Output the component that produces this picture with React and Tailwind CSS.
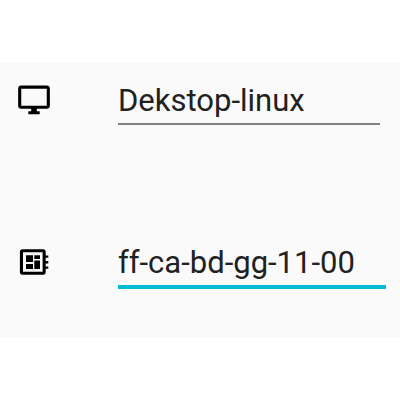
function MonitorIcon(props) {
  return (
    <svg viewBox="0 0 24 24" fill="currentColor" aria-hidden="true" {...props}>
      <path d="M21 1.800H3c-1.300 0-2.200.9-2.200 2.100v12.200c0 1.200.9 2.100 2.200 2.100h7v1.800H8v2.100h8v-2.100h-2v-1.800h7c1.300 0 2.200-.9 2.200-2.100V3.900c0-1.200-.9-2.100-2.200-2.100zm0 14.200H3V4h18v12z" />
    </svg>
  );
}

function BoardIcon(props) {
  return (
    <svg viewBox="0 0 34 34" fill="currentColor" aria-hidden="true" {...props}>
      <path
        fillRule="evenodd"
        d="M5.500 4.300h20.600a2.600 2.600 0 0 1 2.600 2.600v3.600h2.600v2.200h-2.600V16h2.600v2.500h-2.600v3h2.600v2.300h-2.600v3.300a2.600 2.600 0 0 1-2.600 2.600H5.500a2.600 2.600 0 0 1-2.600-2.600V6.900a2.600 2.600 0 0 1 2.600-2.600zM6 7.300v19.400h19.600V7.300z"
      />
      <path d="M9 10.200h7V17H9zM9 19h7v4.900H9zM17.300 10.200H23V14h-5.700zM17.300 15.600H23v8.300h-5.700z" />
    </svg>
  );
}

function Field({ id, label, icon, defaultValue, lineClass }) {
  return (
    <div className="flex items-start">
      <label htmlFor={id} aria-label={label} className="w-[118px] shrink-0 pt-[6px] pl-[17px] text-black">
        {icon}
      </label>
      <input
        id={id}
        type="text"
        defaultValue={defaultValue}
        className={`min-w-0 flex-1 bg-transparent pt-1 pb-0.5 font-[Roboto,sans-serif] text-[31px] leading-[40px] text-[#212121] outline-none ${lineClass}`}
      />
    </div>
  );
}

export default function App() {
  return (
    <main className="bg-white py-[63px]">
      <form className="flex flex-col gap-[114px] bg-[#fafafa] pt-[14px] pb-[48px]">
        <Field
          id="device-name"
          label="Device name"
          defaultValue="Dekstop-linux"
          icon={<MonitorIcon className="size-[34px]" />}
          lineClass="mr-5 border-b-2 border-[#808080]"
        />
        <Field
          id="mac-address"
          label="MAC address"
          defaultValue="ff-ca-bd-gg-11-00"
          icon={<BoardIcon className="size-[34px]" />}
          lineClass="mr-[14px] border-b-4 border-[#00bcd4]"
        />
      </form>
    </main>
  );
}
